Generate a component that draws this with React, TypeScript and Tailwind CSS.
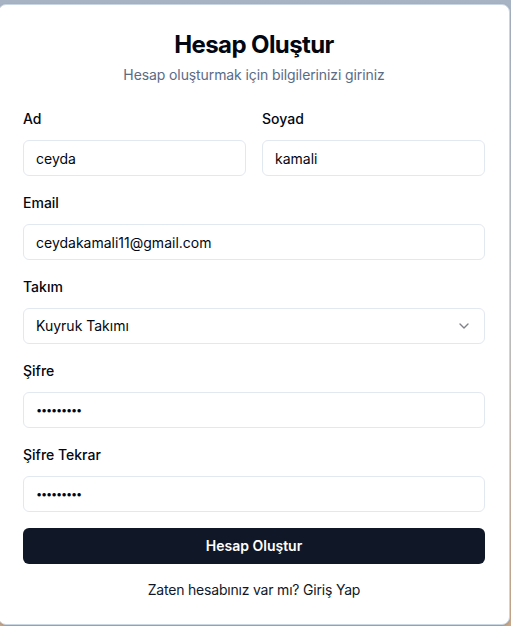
import { ChevronDown } from 'lucide-react';

const FONT = "font-['Inter','Liberation_Sans',sans-serif]";

function Field({ label, children }: { label: string; children: React.ReactNode }) {
  return (
    <div className="flex flex-col gap-[11px]">
      <label className="text-sm leading-5 font-medium text-gray-950">{label}</label>
      {children}
    </div>
  );
}

function TextInput({ value }: { value: string }) {
  return (
    <input
      type="text"
      value={value}
      readOnly
      className="h-9 w-full rounded-md border border-slate-200 bg-white px-3 text-sm text-gray-950 outline-none"
    />
  );
}

// masked value drawn as small bullets, like the browser's password field
function PasswordInput() {
  return (
    <input
      type="text"
      value={'•'.repeat(9)}
      readOnly
      className="h-9 w-full rounded-md border border-slate-200 bg-white px-3 text-[11px] tracking-[-1.2px] text-gray-950 outline-none"
    />
  );
}

export default function App() {
  return (
    <div
      className={`${FONT} min-h-[626px] w-[511px] overflow-hidden bg-gradient-to-b from-[#a7b3c2] via-[#c3c6c9] to-[#c8a88b] pt-1`}
    >
      <div className="ml-[-2px] w-[512px] rounded-lg border border-slate-300 bg-white shadow-sm">
        {/* header */}
        <div className="flex flex-col items-center px-6 pt-6 pb-6">
          <h1 className="text-2xl leading-8 font-bold tracking-tight text-gray-950">Hesap Oluştur</h1>
          <p className="mt-1 text-sm leading-5 tracking-[-0.1px] text-[#5b6b84]">Hesap oluşturmak için bilgilerinizi giriniz</p>
        </div>

        {/* form */}
        <div className="flex flex-col gap-[17px] px-6">
          <div className="grid grid-cols-2 gap-4">
            <Field label="Ad">
              <TextInput value="ceyda" />
            </Field>
            <Field label="Soyad">
              <TextInput value="kamali" />
            </Field>
          </div>
          <Field label="Email">
            <TextInput value="ceydakamali11@gmail.com" />
          </Field>
          <Field label="Takım">
            <button className="flex h-9 w-full items-center justify-between rounded-md border border-slate-200 bg-white px-3 text-sm text-gray-950">
              <span>Kuyruk Takımı</span>
              <ChevronDown className="h-4 w-4 opacity-50" />
            </button>
          </Field>
          <Field label="Şifre">
            <PasswordInput />
          </Field>
          <Field label="Şifre Tekrar">
            <PasswordInput />
          </Field>
        </div>

        <div className="flex flex-col px-6 pt-4 pb-6">
          <button className="h-9 w-full rounded-md bg-gray-900 text-sm font-semibold text-white">Hesap Oluştur</button>
          <p className="mt-4 text-center text-sm leading-5 tracking-[-0.2px] text-gray-900">Zaten hesabınız var mı? Giriş Yap</p>
        </div>
      </div>
    </div>
  );
}
